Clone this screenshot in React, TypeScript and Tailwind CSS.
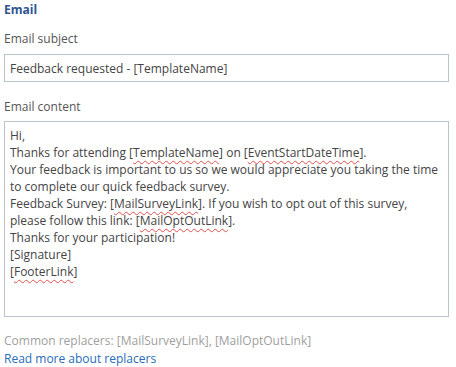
const font = { fontFamily: '"Open Sans", "Noto Sans", sans-serif' };

function Tag({ children }: { children: string }) {
  return (
    <>
      [<span className="underline decoration-wavy decoration-[#e05050] decoration-[0.5px] underline-offset-[3px]">{children}</span>]
    </>
  );
}

export default function App() {
  return (
    <div className="w-[456px] h-[367px] bg-white text-[12px] leading-[17px] text-[#444]" style={font}>
      <div className="px-[4px] pt-[1px]">
        <h2 className="font-bold text-[#2d5594] leading-[18px]">Email</h2>

        <div className="mt-[11px] text-[#555]">Email subject</div>
        <div className="mt-[7px] w-[445px] h-[28px] border border-[#b9c4ce] px-[5px] flex items-center text-[#444]">
          Feedback requested - [TemplateName]
        </div>

        <div className="mt-[16px] text-[#555]">Email content</div>
        <div className="mt-[6px] w-[445px] h-[196px] border border-[#b9c4ce] px-[5px] pt-[5px] text-[#444]">
          <div>Hi,</div>
          <div>
            Thanks for attending <Tag>TemplateName</Tag> on <Tag>EventStartDateTime</Tag>.
          </div>
          <div>Your feedback is important to us so we would appreciate you taking the time</div>
          <div>to complete our quick feedback survey.</div>
          <div>
            Feedback Survey: <Tag>MailSurveyLink</Tag>. If you wish to opt out of this survey,
          </div>
          <div>
            please follow this link: <Tag>MailOptOutLink</Tag>.
          </div>
          <div>Thanks for your participation!</div>
          <div>[Signature]</div>
          <div>
            <Tag>FooterLink</Tag>
          </div>
        </div>

        <div className="mt-[15px] text-[#a0a0a0]">Common replacers: [MailSurveyLink], [MailOptOutLink]</div>
        <a className="block text-[#2a6cb8] mt-[1px]" href="#">
          Read more about replacers
        </a>
      </div>
    </div>
  );
}
